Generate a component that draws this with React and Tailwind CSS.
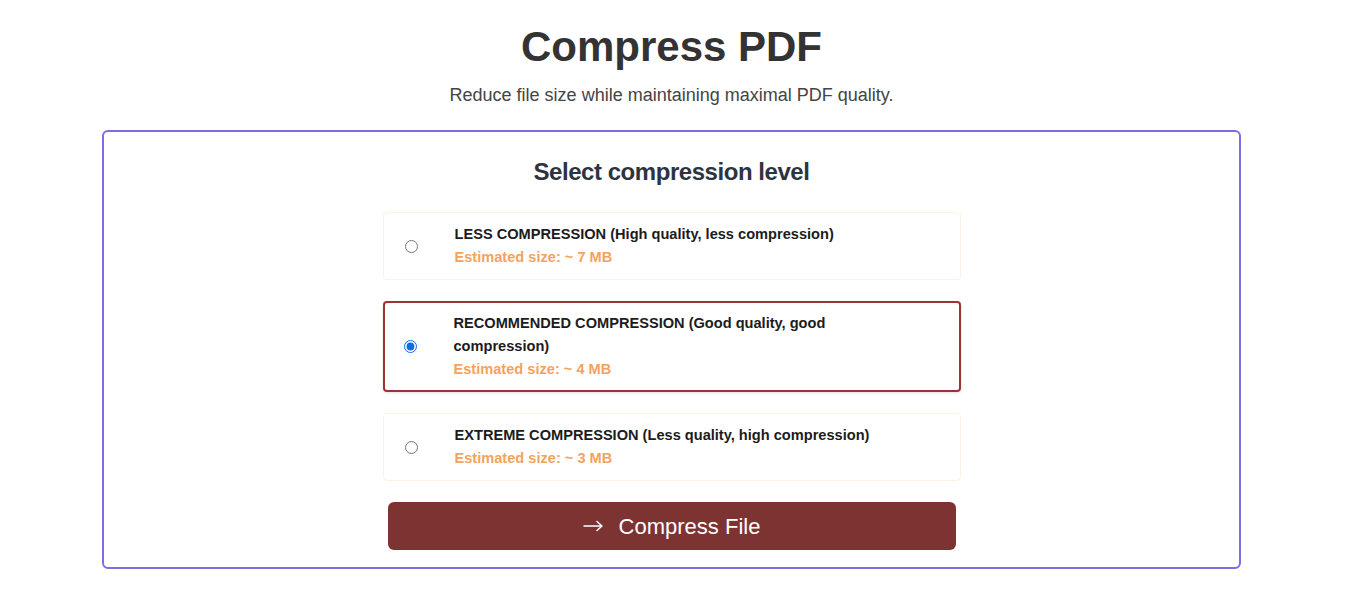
import React, { useState } from 'react';

const levels = [
  { id: 'less', name: 'LESS COMPRESSION (High quality, less compression)', size: '~ 7 MB' },
  { id: 'recommended', name: 'RECOMMENDED COMPRESSION (Good quality, good compression)', size: '~ 4 MB' },
  { id: 'extreme', name: 'EXTREME COMPRESSION (Less quality, high compression)', size: '~ 3 MB' },
];

export default function App() {
  const [level, setLevel] = useState('recommended');

  return (
    <div className="min-h-[592px] bg-white font-['Liberation_Sans',Arial,sans-serif]">
      <div className="w-[1343px] px-[102px] pt-[23px]">
        <h1 className="text-center text-[42px] font-bold leading-[48px] text-[#333333]">Compress PDF</h1>
        <p className="mt-[12px] text-center text-[18px] leading-[24px] text-[#444444]">
          Reduce file size while maintaining maximal PDF quality.
        </p>

        <div className="mt-[23px] rounded-[6px] border-2 border-[#7b6ee0] pt-[24px] pb-[17px]">
          <h2 className="text-center text-[24px] font-bold leading-[32px] tracking-[-0.45px] text-[#2d3440]">
            Select compression level
          </h2>

          <div className="mx-auto mt-[24px] flex w-[578px] flex-col gap-[21px]">
            {levels.map((lv) => {
              const active = lv.id === level;
              return (
                <label
                  key={lv.id}
                  className={`flex cursor-pointer items-center rounded-[4px] bg-white ${
                    active
                      ? 'border-2 border-[#9b3535] py-[9px] pl-[19px] pr-[24px] shadow-[0_1px_3px_rgba(0,0,0,0.12)]'
                      : 'border border-[#fdf1e4] py-[10px] pl-[21px] pr-[25px]'
                  }`}
                >
                  <input
                    type="radio"
                    name="level"
                    checked={active}
                    onChange={() => setLevel(lv.id)}
                    className="m-0 h-[13px] w-[13px] shrink-0 accent-[#0b6cf0]"
                  />
                  <div className="ml-[37px] pr-[60px] text-[14.6px] font-bold leading-[23px]">
                    <div className="text-[#1c1c1c]">{lv.name}</div>
                    <div className="text-[#f5a25c]">Estimated size: {lv.size}</div>
                  </div>
                </label>
              );
            })}
          </div>

          <button className="mx-auto mt-[21px] flex h-[48px] w-[568px] items-center justify-center gap-[16px] rounded-[6px] bg-[#7e3333] text-[22px] text-white">
            <svg width="20" height="12" viewBox="0 0 20 12" fill="none" stroke="currentColor" strokeWidth="1.4" strokeLinecap="round">
              <path d="M1 6h18M14 1.5 19 6l-5 4.5" />
            </svg>
            <span>Compress File</span>
          </button>
        </div>
      </div>
    </div>
  );
}
